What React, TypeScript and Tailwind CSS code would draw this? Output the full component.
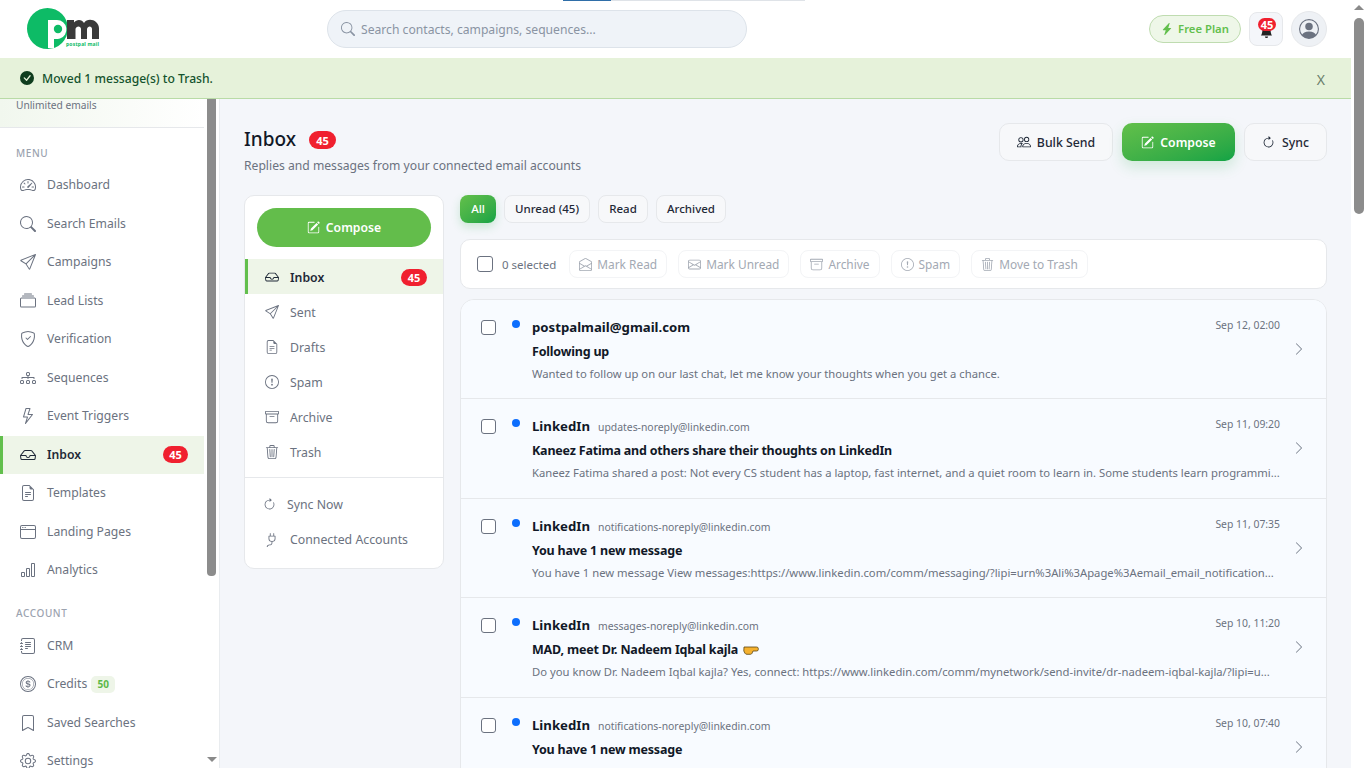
import React from 'react';
import {
  BsSpeedometer2, BsSearch, BsSend, BsCollection, BsShieldCheck, BsDiagram3, BsLightning, BsInbox,
  BsFileEarmarkText, BsWindow, BsBarChart, BsJournalText, BsCoin, BsBookmark, BsGear, BsPeople, BsPencilSquare,
  BsArrowClockwise, BsExclamationCircle, BsArchive, BsTrash3, BsPlug, BsEnvelopeOpen, BsEnvelope, BsChevronRight,
  BsLightningChargeFill, BsPersonCircle, BsBellFill, BsCheckCircleFill,
} from 'react-icons/bs';

const menu = [
  { label: 'Dashboard', icon: BsSpeedometer2 },
  { label: 'Search Emails', icon: BsSearch },
  { label: 'Campaigns', icon: BsSend },
  { label: 'Lead Lists', icon: BsCollection },
  { label: 'Verification', icon: BsShieldCheck },
  { label: 'Sequences', icon: BsDiagram3 },
  { label: 'Event Triggers', icon: BsLightning },
  { label: 'Inbox', icon: BsInbox, active: true },
  { label: 'Templates', icon: BsFileEarmarkText },
  { label: 'Landing Pages', icon: BsWindow },
  { label: 'Analytics', icon: BsBarChart },
];

const account = [
  { label: 'CRM', icon: BsJournalText },
  { label: 'Credits', icon: BsCoin, chip: '50' },
  { label: 'Saved Searches', icon: BsBookmark },
  { label: 'Settings', icon: BsGear },
];

const folders = [
  { label: 'Inbox', icon: BsInbox, active: true },
  { label: 'Sent', icon: BsSend },
  { label: 'Drafts', icon: BsFileEarmarkText },
  { label: 'Spam', icon: BsExclamationCircle },
  { label: 'Archive', icon: BsArchive },
  { label: 'Trash', icon: BsTrash3 },
];

const bulkActions = [
  { label: 'Mark Read', icon: BsEnvelopeOpen },
  { label: 'Mark Unread', icon: BsEnvelope },
  { label: 'Archive', icon: BsArchive },
  { label: 'Spam', icon: BsExclamationCircle },
  { label: 'Move to Trash', icon: BsTrash3 },
];

const messages = [
  {
    from: 'postpalmail@gmail.com',
    address: '',
    subject: 'Following up',
    preview: 'Wanted to follow up on our last chat, let me know your thoughts when you get a chance.',
    date: 'Sep 12, 02:00',
  },
  {
    from: 'LinkedIn',
    address: 'updates-noreply@linkedin.com',
    subject: 'Kaneez Fatima and others share their thoughts on LinkedIn',
    preview: 'Kaneez Fatima shared a post: Not every CS student has a laptop, fast internet, and a quiet room to learn in. Some students learn programmi...',
    date: 'Sep 11, 09:20',
  },
  {
    from: 'LinkedIn',
    address: 'notifications-noreply@linkedin.com',
    subject: 'You have 1 new message',
    preview: 'You have 1 new message View messages:https://www.linkedin.com/comm/messaging/?lipi=urn%3Ali%3Apage%3Aemail_email_notification...',
    date: 'Sep 11, 07:35',
  },
  {
    from: 'LinkedIn',
    address: 'messages-noreply@linkedin.com',
    subject: 'MAD, meet Dr. Nadeem Iqbal kajla',
    hand: true,
    preview: 'Do you know Dr. Nadeem Iqbal kajla? Yes, connect: https://www.linkedin.com/comm/mynetwork/send-invite/dr-nadeem-iqbal-kajla/?lipi=u...',
    date: 'Sep 10, 11:20',
  },
  {
    from: 'LinkedIn',
    address: 'notifications-noreply@linkedin.com',
    subject: 'You have 1 new message',
    preview: 'You have 1 new message View messages:https://www.linkedin.com/comm/messaging/?lipi=urn%3Ali%3Apage%3Aemail_email_notification...',
    date: 'Sep 10, 07:40',
  },
];

const Logo = () => (
  <svg width="74" height="42" viewBox="0 0 74 42" className="block shrink-0">
    <circle cx="20.500" cy="20.500" r="20.500" fill="#0dbb66" />
    <path d="M21 12h9a9.500 9.500 0 0 1 3 18.500q-3 .8-6 .5v9.300q-3 .4-6-.3z" fill="#fff" />
    <circle cx="31" cy="21" r="4.200" fill="#0dbb66" />
    <path d="M40 12h7v2.500c2.500-3.500 8-3.500 10 .5 2.500-4.500 9-4 12-1 2 2 3 4 3 6.500V31h-7V21c0-3.500-4.500-3.500-5 0v10h-6V21c0-3.500-5-3.500-5.500 0L48.500 31H40z" fill="#3a3a3a" />
    <text x="39" y="37.500" fontSize="5" fontWeight="700" fill="#0dbb66" fontFamily="Noto Sans, sans-serif" textLength="33">postpal mail</text>
  </svg>
);

const Badge = ({ className = '' }: { className?: string }) => (
  <span className={`inline-flex items-center justify-center bg-[#f0202f] text-white text-[11px] font-bold leading-none rounded-full ${className}`}>45</span>
);

const HandEmoji = () => (
  <svg width="16" height="10" viewBox="0 0 16 10" className="shrink-0">
    <path d="M1 2h12.500q1.800 0 1.800 1.500v1q0 1.500-1.800 1.500h-3.500l-1 2.300q-.5 1-1.500 1H4q-1.500 0-2-1L.8 6z" fill="#f5b12e" stroke="#5a4510" strokeWidth="0.8" />
  </svg>
);

const WindowScrollbar = () => (
  <div className="w-[15px] shrink-0 bg-white flex flex-col items-center pt-[5px]">
    <div className="w-0 h-0 border-x-[5px] border-x-transparent border-b-[5px] border-b-[#8a8a8a]" />
    <div className="w-[10px] h-[196px] mt-[8px] rounded-full bg-[#8c8c8c]" />
  </div>
);

const Sidebar = () => (
  <aside className="w-[220px] shrink-0 h-full bg-white border-r border-[#e9ecef] flex overflow-hidden">
    <div className="w-[204px] shrink-0 h-full overflow-hidden">
      <div className="h-[29px] border-b border-[#e6e8eb] bg-gradient-to-r from-[#f1f7ee] to-white pl-4 text-[10.200px] leading-[12px] text-[#6b7280]">
        Unlimited emails
      </div>
      <div className="pl-4 mt-[19px] text-[10px] leading-[12px] font-medium tracking-[0.06em] text-[#9ca3af]">MENU</div>
      <nav className="mt-[7px] flex flex-col">
        {menu.map((m) => (
          <div
            key={m.label}
            className={`h-[38.500px] flex items-center gap-[11px] pr-4 text-[12.200px] border-l-[3px] pl-[17px] ${
              m.active ? 'bg-[#eef5e8] border-[#62bf4d] text-[#1f2937] font-semibold' : 'border-transparent text-[#6b7280]'
            }`}
          >
            <m.icon size={16} className="shrink-0" />
            <span className="flex-1">{m.label}</span>
            {m.active && <Badge className="w-[25px] h-[17px] rounded-[7px]" />}
          </div>
        ))}
      </nav>
      <div className="pl-4 mt-[17px] text-[10px] leading-[12px] font-medium tracking-[0.06em] text-[#9ca3af]">ACCOUNT</div>
      <nav className="mt-[8px] flex flex-col">
        {account.map((m) => (
          <div key={m.label} className="h-[38.500px] flex items-center gap-[11px] text-[12.200px] pl-[20px] text-[#6b7280]">
            <m.icon size={16} className="shrink-0" />
            <span>{m.label}</span>
            {m.chip && (
              <span className="-ml-[7px] w-[24px] h-[17px] rounded-[5px] bg-[#eef5e8] text-[#5cb948] text-[10px] font-bold flex items-center justify-center">
                {m.chip}
              </span>
            )}
          </div>
        ))}
      </nav>
    </div>
    <div className="w-[15px] shrink-0 h-full flex flex-col items-center">
      <div className="w-[9px] h-[477px] bg-[#8c8c8c] rounded-b-[4px]" />
      <div className="mt-auto mb-[6px] w-0 h-0 border-x-[5px] border-x-transparent border-t-[5px] border-t-[#8a8a8a]" />
    </div>
  </aside>
);

const FolderPanel = () => (
  <div className="w-[200px] shrink-0 h-[374px] bg-white border border-[#e6e8eb] rounded-[10px] overflow-hidden">
    <div className="px-3 pt-3">
      <div className="h-[39px] rounded-full bg-[#63bd4b] text-white font-semibold text-[12.200px] flex items-center justify-center gap-[6px]">
        <BsPencilSquare size={13} />
        <span className="pt-[1px]">Compose</span>
      </div>
    </div>
    <div className="mt-[12px] flex flex-col">
      {folders.map((f) => (
        <div
          key={f.label}
          className={`h-[35px] flex items-center gap-[11px] border-l-[3px] pl-[17px] pr-[16px] text-[12.300px] ${
            f.active ? 'bg-[#eef5e8] border-[#62bf4d] text-[#1f2937] font-semibold' : 'border-transparent text-[#6b7280]'
          }`}
        >
          <f.icon size={14} className="shrink-0" />
          <span className="flex-1 pt-[3px]">{f.label}</span>
          {f.active && <Badge className="w-[26px] h-[17px] mt-[1px]" />}
        </div>
      ))}
    </div>
    <div className="mt-[8px] border-t border-[#e6e8eb] pt-[9px] flex flex-col">
      <div className="h-[35px] flex items-center gap-[11px] pl-[18px] text-[12.300px] text-[#6b7280]">
        <BsArrowClockwise size={13} />
        <span className="pt-[2px]">Sync Now</span>
      </div>
      <div className="h-[35px] flex items-center gap-[11px] pl-[20px] text-[12.300px] text-[#6b7280]">
        <BsPlug size={14} />
        <span className="pt-[2px]">Connected Accounts</span>
      </div>
    </div>
  </div>
);

const Row = ({ m, last }: { m: (typeof messages)[number]; last: boolean }) => (
  <div className={`h-[99.500px] shrink-0 flex bg-[#f8fbff] pl-[20px] pr-[20px] pt-[18px] ${last ? '' : 'border-b border-[#e6e8eb]'}`}>
    <span className="w-[15px] h-[15px] mt-[2px] rounded-[3px] border border-[#6b7280] bg-white shrink-0" />
    <span className="w-2 h-2 rounded-full bg-[#0d6efd] ml-[16px] mt-[2px] shrink-0" />
    <div className="ml-[12px] flex-1 min-w-0">
      <div className="flex items-center h-[20px] justify-between">
        <div className="flex items-baseline gap-[8px]">
          <span className="text-[13.200px] font-bold text-[#111827]">{m.from}</span>
          {m.address && <span className="text-[10.400px] text-[#6b7280]">{m.address}</span>}
        </div>
        <span className="text-[10.400px] text-[#6b7280] -mt-[4px]">{m.date}</span>
      </div>
      <div className="mt-[4px] text-[12.500px] tracking-[-0.2px] leading-[20px] font-bold text-[#111827] flex items-center gap-[5px]">
        {m.subject}
        {m.hand && <HandEmoji />}
      </div>
      <div className="mt-[4px] text-[11.270px] leading-[16px] text-[#6b7280] whitespace-nowrap">{m.preview}</div>
    </div>
    <BsChevronRight size={14} className="text-[#7b8390] ml-[12px] mt-[24px] shrink-0" />
  </div>
);

export default function App() {
  return (
    <div className="h-screen flex overflow-hidden bg-[#f4f6fa] font-['Noto_Sans',sans-serif]">
      <div className="flex-1 min-w-0 flex flex-col h-full">
        <header className="h-[58px] shrink-0 bg-white flex items-center pl-[27px] pr-[24px]">
          <Logo />
          <div className="ml-[226px] w-[420px] h-[38px] rounded-full bg-[#eff3f8] border border-[#dde3ea] flex items-center pl-[13px] gap-[6px] text-[#8a94a3] text-[12.150px]">
            <BsSearch size={14} />
            <span className="pt-[2px]">Search contacts, campaigns, sequences...</span>
          </div>
          <div className="ml-auto flex items-center gap-[8px]">
            <div className="w-[92px] h-[28px] rounded-full border border-[#bfdcb0] bg-[#eef7e8] text-[#62bf4d] text-[11.300px] font-semibold flex items-center justify-center gap-[5px]">
              <BsLightningChargeFill size={12} />
              Free Plan
            </div>
            <div className="relative w-[34px] h-[34px] rounded-[8px] bg-[#f4f6fa] border border-[#e6e8eb] flex items-end justify-center pb-[7px]">
              <BsBellFill size={13} className="text-[#222]" />
              <Badge className="absolute top-[5px] left-[8px] w-[18px] h-[13px] text-[9px]" />
            </div>
            <div className="w-[36px] h-[36px] rounded-full bg-[#eef1f5] border border-[#e6e8eb] flex items-center justify-center text-[#6b7280]">
              <BsPersonCircle size={20} />
            </div>
          </div>
        </header>

        <div className="h-[41px] shrink-0 bg-[#e6f2da] border-b border-[#b9dba6] flex items-center pl-[20px] pr-[26px] text-[12.150px] font-medium text-[#14532d]">
          <BsCheckCircleFill size={14} className="text-[#0f3d1e] mr-[8px] shrink-0" />
          <span className="pt-[2px]">Moved 1 message(s) to Trash.</span>
          <span className="ml-auto pt-[3px] text-[#6b7f6b] text-[14px] font-normal">X</span>
        </div>

        <div className="flex-1 min-h-0 flex">
          <Sidebar />
          <main className="flex-1 min-w-0 px-[24px] pt-[23px] overflow-hidden">
            <div className="flex items-start justify-between">
              <div>
                <div className="flex items-center gap-[13px]">
                  <h1 className="text-[19px] leading-[34px] font-medium text-[#111827]">Inbox</h1>
                  <Badge className="w-[27px] h-[18px] mt-[2px]" />
                </div>
                <p className="text-[12.150px] leading-[18px] text-[#6b7280] mt-[1px]">Replies and messages from your connected email accounts</p>
              </div>
              <div className="flex items-center gap-[9px] mt-[1px]">
                <div className="w-[114px] h-[38px] rounded-[10px] bg-[#f7f8fa] border border-[#e6e8eb] flex items-center justify-center gap-[6px] text-[12.300px] font-medium text-[#1f2937]">
                  <BsPeople size={14} />
                  <span className="pt-[2px]">Bulk Send</span>
                </div>
                <div className="w-[113px] h-[38px] rounded-[10px] bg-gradient-to-br from-[#62c04a] to-[#0da345] shadow-[0_6px_14px_rgba(40,170,70,0.18)] flex items-center justify-center gap-[6px] text-[12.200px] font-semibold text-white">
                  <BsPencilSquare size={13} />
                  <span className="pt-[2px]">Compose</span>
                </div>
                <div className="w-[83px] h-[38px] rounded-[10px] bg-[#f7f8fa] border border-[#e6e8eb] flex items-center justify-center gap-[7px] text-[12.300px] font-medium text-[#1f2937]">
                  <BsArrowClockwise size={13} />
                  <span className="pt-[2px]">Sync</span>
                </div>
              </div>
            </div>

            <div className="mt-[20px] flex gap-[16px]">
              <FolderPanel />
              <div className="flex-1 min-w-0 flex flex-col">
                <div className="flex gap-[8px] text-[11.500px] font-medium text-[#1f2937]">
                  <span className="w-[36px] h-[28px] rounded-[8px] bg-gradient-to-br from-[#62c04a] to-[#0da345] text-white flex items-center justify-center shadow-[0_4px_10px_rgba(40,170,70,0.2)]">All</span>
                  <span className="w-[86px] h-[28px] rounded-[8px] bg-[#f7f8fa] border border-[#e6e8eb] flex items-center justify-center">Unread (45)</span>
                  <span className="w-[50px] h-[28px] rounded-[8px] bg-[#f7f8fa] border border-[#e6e8eb] flex items-center justify-center">Read</span>
                  <span className="w-[70px] h-[28px] rounded-[8px] bg-[#f7f8fa] border border-[#e6e8eb] flex items-center justify-center">Archived</span>
                </div>
                <div className="mt-[16px] h-[50px] rounded-[10px] bg-white border border-[#e6e8eb] flex items-center pl-[16px] text-[11.900px]">
                  <span className="w-[16px] h-[16px] rounded-[3px] border border-[#6b7280] bg-white shrink-0" />
                  <span className="ml-[9px] pt-[2px] text-[11.500px] text-[#6b7280] whitespace-nowrap">0 selected</span>
                  <div className="ml-[13px] flex gap-[11px] text-[#a3a9b3]">
                    {bulkActions.map((a) => (
                      <span key={a.label} className="h-[28px] px-[9px] rounded-[8px] border border-[#f3f4f6] flex items-center gap-[5px] whitespace-nowrap">
                        <a.icon size={13} />
                        <span className="pt-[2px]">{a.label}</span>
                      </span>
                    ))}
                  </div>
                </div>
                <div className="mt-[9.600px] h-[600px] rounded-[14px] border border-[#e6e8eb] overflow-hidden flex flex-col bg-[#f8fbff]">
                  {messages.map((m, i) => (
                    <Row key={i} m={m} last={i === messages.length - 1} />
                  ))}
                </div>
              </div>
            </div>
          </main>
        </div>
      </div>
      <WindowScrollbar />
      <div className="absolute top-0 left-[563px] w-[242px] h-[1px] flex">
        <span className="w-[48px] bg-[#2f6ea8]" />
        <span className="flex-1 bg-[#dfe3e8]" />
      </div>
    </div>
  );
}
